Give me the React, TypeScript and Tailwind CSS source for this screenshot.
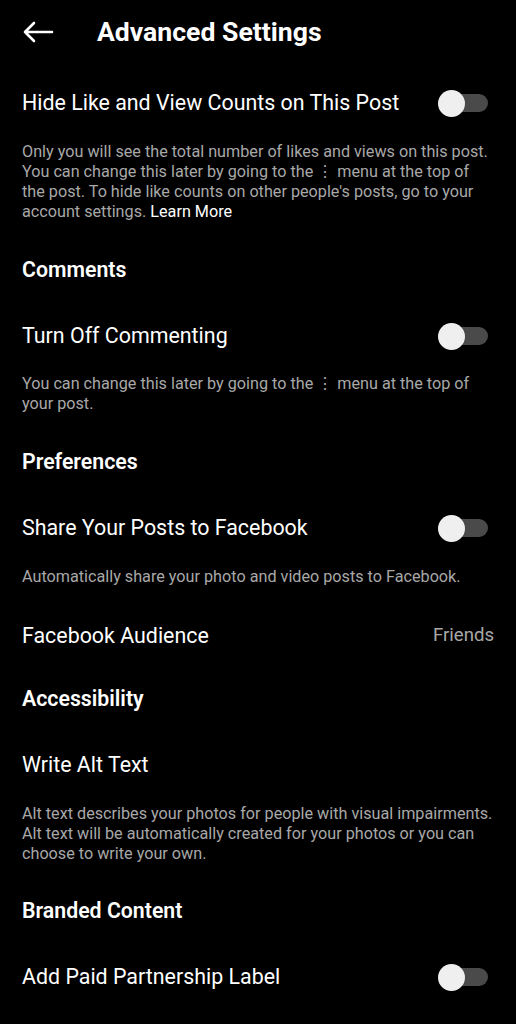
import React from "react";

const Toggle = () => (
  <div className="relative w-[50px] h-[28px] flex items-center">
    <div className="absolute right-0 w-[46px] h-[18px] rounded-full bg-[#4a4a4a]" />
    <div className="absolute left-0 w-[27px] h-[27px] rounded-full bg-[#efefef]" />
  </div>
);

const Row = ({ label, mt, toggle = true }: { label: string; mt: string; toggle?: boolean }) => (
  <div className={`flex items-center justify-between h-[56px] pl-[22px] pr-[28px] ${mt}`}>
    <span className="text-[21.4px] text-white">{label}</span>
    {toggle && <Toggle />}
  </div>
);

const Section = ({ title, mt }: { title: string; mt: string }) => (
  <div className={`flex items-center h-[40px] px-[22px] ${mt}`}>
    <h3 className="text-[21.3px] font-semibold text-white">{title}</h3>
  </div>
);

const Desc = ({ children, mt }: { children: React.ReactNode; mt: string }) => (
  <p className={`w-[495px] pl-[22px] text-[16.2px] leading-[20px] text-[#a8a8a8] ${mt}`}>{children}</p>
);

export default function App() {
  return (
    <div
      className="w-[516px] h-[1024px] bg-black overflow-hidden"
      style={{ fontFamily: "Roboto, 'Liberation Sans', sans-serif" }}
    >
      {/* Cabecera */}
      <div className="flex items-center h-[64px] pl-[22px]">
        <svg width="32" height="24" viewBox="0 0 32 24" fill="none" stroke="white" strokeWidth="2.6" strokeLinecap="round" strokeLinejoin="round">
          <path d="M30 12H3M12 3L3 12l9 9" />
        </svg>
        <h1 className="ml-[43px] text-[26.6px] font-bold text-white">Advanced Settings</h1>
      </div>

      <Row label="Hide Like and View Counts on This Post" mt="mt-[11px]" />
      <Desc mt="mt-[11px]">
        Only you will see the total number of likes and views on this post. You can change this later by going to the ⋮ menu at the top of the post. To hide like counts on other people's posts, go to your account settings.{" "}
        <span className="text-white">Learn More</span>
      </Desc>

      <Section title="Comments" mt="mt-[28px]" />
      <Row label="Turn Off Commenting" mt="mt-[18px]" />
      <Desc mt="mt-[10px]">
        You can change this later by going to the ⋮ menu at the top of your post.
      </Desc>

      <Section title="Preferences" mt="mt-[28px]" />
      <Row label="Share Your Posts to Facebook" mt="mt-[18px]" />
      <Desc mt="mt-[11px]">Automatically share your photo and video posts to Facebook.</Desc>

      <div className="flex items-center justify-between h-[56px] px-[22px] mt-[21px]">
        <span className="text-[21.4px] text-white">Facebook Audience</span>
        <span className="text-[18.6px] text-[#a8a8a8]">Friends</span>
      </div>

      <Section title="Accessibility" mt="mt-[15px]" />
      <Row label="Write Alt Text" mt="mt-[18px]" toggle={false} />
      <Desc mt="mt-[11px]">
        Alt text describes your photos for people with visual impairments. Alt text will be automatically created for your photos or you can choose to write your own.
      </Desc>

      <Section title="Branded Content" mt="mt-[27px]" />
      <Row label="Add Paid Partnership Label" mt="mt-[18px]" />
    </div>
  );
}
